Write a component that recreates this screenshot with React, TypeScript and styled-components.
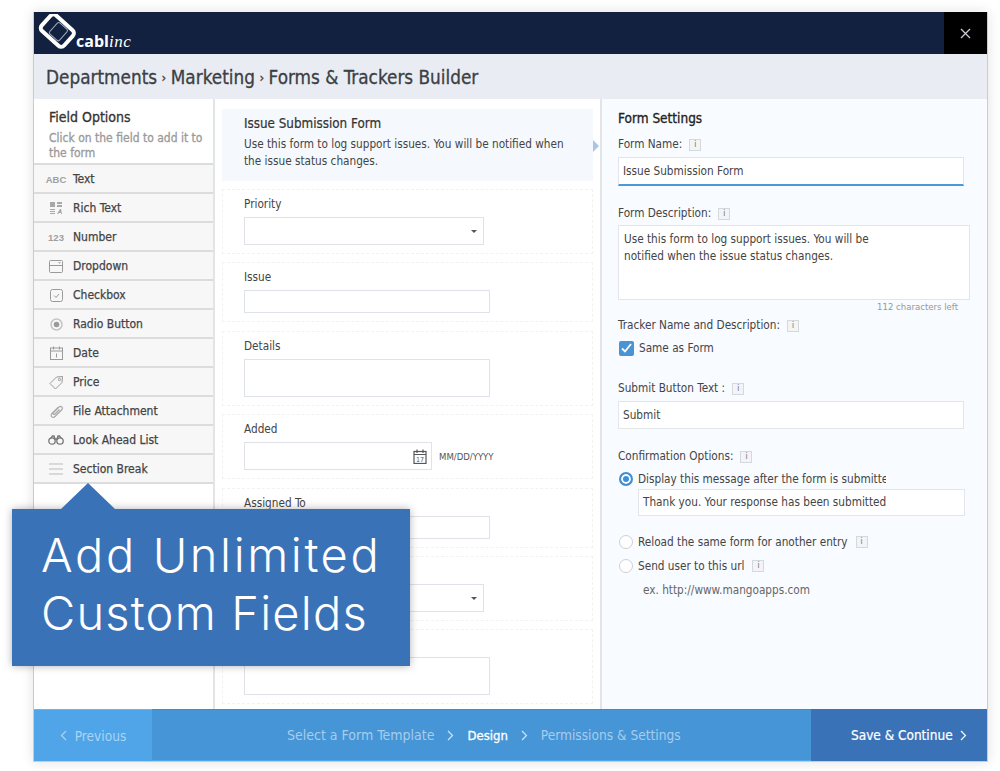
import React from 'react';
import styled, { createGlobalStyle } from 'styled-components';

const GlobalStyle = createGlobalStyle`
  html, body {
    margin: 0;
    padding: 0;
    background: #fff;
  }
  body {
    font-family: "DejaVu Sans", "Noto Sans", sans-serif;
    font-stretch: condensed;
    font-size: 11.7px;
    color: #444;
  }
  * {
    box-sizing: border-box;
  }
`;

const Stage = styled.div`
  position: relative;
  width: 1000px;
  height: 771px;
  padding: 12px 12px 9px 33px;
  overflow: hidden;
`;

const Window = styled.div`
  display: flex;
  flex-direction: column;
  height: 750px;
  border: 1px solid #c9cdd2;
  border-top: none;
  box-shadow: 0 0 12px rgba(0, 0, 0, 0.12);
`;

const TopBar = styled.header`
  display: flex;
  justify-content: space-between;
  flex: 0 0 42px;
  background: #12213f;
`;

const Logo = styled.div`
  display: flex;
  align-items: flex-end;
  padding: 2px 0 4px 3px;
`;

const LogoText = styled.span`
  font-family: "Open Sans", sans-serif;
  font-stretch: normal;
  font-size: 16px;
  font-weight: 700;
  color: #fff;
  line-height: 17px;
  margin-left: -1px;
`;

const LogoInc = styled.i`
  font-family: "Liberation Serif", serif;
  font-weight: 400;
  font-size: 17px;
  letter-spacing: 0.5px;
`;

const CloseBox = styled.button`
  width: 43px;
  border: none;
  padding: 0;
  background: #000;
  display: flex;
  align-items: center;
  justify-content: center;
`;

const Breadcrumb = styled.div`
  flex: 0 0 45px;
  display: flex;
  align-items: center;
  padding: 1px 0 0 12px;
  background: #e9edf3;
  font-size: 18.8px;
  font-weight: 400;
  color: #3c3f44;
  -webkit-text-stroke: 0.3px #3c3f44;
`;

const CrumbSep = styled.span`
  font-size: 13px;
  margin: 0 4.5px;
`;

const Body = styled.div`
  flex: 1;
  display: flex;
  min-height: 0;
`;

const Sidebar = styled.aside`
  flex: 0 0 181px;
  border-right: 2px solid #e2e4e6;
`;

const SidebarHead = styled.div`
  height: 64px;
  padding: 9px 0 0 15px;
`;

const SideTitle = styled.h3`
  margin: 0 0 5px;
  font-size: 14px;
  line-height: 18px;
  font-weight: 400;
  color: #333;
  -webkit-text-stroke: 0.3px #333;
`;

const SideHint = styled.p`
  margin: 0;
  font-size: 12px;
  line-height: 15px;
  color: #9a9a9a;
  -webkit-text-stroke: 0.3px #9a9a9a;
`;

const FieldList = styled.ul`
  list-style: none;
  margin: 0;
  padding: 0;
  border-top: 2px solid #dcdcdc;
`;

const FieldRow = styled.li`
  display: flex;
  align-items: center;
  height: 29px;
  padding-top: 1px;
  font-size: 12px;
  background: #f7f7f7;
  border-bottom: 2px solid #dcdcdc;
  color: #444;
  -webkit-text-stroke: 0.25px #444;
`;

const RowIcon = styled.span`
  flex: 0 0 39px;
  display: flex;
  justify-content: center;
  padding-left: 5px;
  color: #a0a0a0;
  font-family: "Liberation Sans", sans-serif;
  font-size: 9.5px;
  font-weight: 700;
  -webkit-text-stroke: 0;
`;

const Center = styled.main`
  flex: 0 0 387px;
  position: relative;
  padding: 10px 7px 0;
  overflow: hidden;
  border-right: 2px solid #e2e4e6;
`;

const FormHead = styled.div`
  height: 72px;
  margin-bottom: 8px;
  padding: 6px 22px 0;
  background: #f5f9fd;
  line-height: 17px;
  white-space: nowrap;
`;

const FormTitle = styled.div`
  font-size: 13.3px;
  line-height: 17px;
  margin-bottom: 4px;
  color: #333;
  -webkit-text-stroke: 0.2px #333;
`;

const Pointer = styled.span`
  position: absolute;
  left: 378px;
  top: 41px;
  border-left: 6px solid #a9c6e6;
  border-top: 6px solid transparent;
  border-bottom: 6px solid transparent;
`;

const FieldBox = styled.section`
  padding: 6px 0 8px 21px;
  margin-bottom: 8.4px;
  border: 1px dashed #f2f2f2;
`;

const FieldLabel = styled.div`
  height: 21px;
  padding-top: 1px;
  line-height: 15px;
  color: #444;
`;

const Inline = styled.div`
  display: flex;
  align-items: center;
`;

const Input = styled.div<{ $w: number; $h: number }>`
  position: relative;
  width: ${(p) => p.$w}px;
  height: ${(p) => p.$h}px;
  background: #fff;
  border: 1px solid #dfe3e9;
`;

const Caret = styled.span`
  position: absolute;
  right: 6px;
  top: 12px;
  border-top: 3px solid #555;
  border-left: 3px solid transparent;
  border-right: 3px solid transparent;
`;

const DateHint = styled.span`
  margin-left: 7px;
  font-size: 9.5px;
  color: #555;
`;

const CalBox = styled.span`
  display: flex;
  align-items: center;
  justify-content: center;
  position: absolute;
  right: 0;
  top: 0;
  bottom: 0;
  width: 22px;
`;

const Settings = styled.aside`
  flex: 1;
  padding: 11px 0 0 16px;
  background: #f8fbff;
  line-height: 15px;
`;

const SettingsTitle = styled.h3`
  margin: 0 0 10px;
  font-size: 13.5px;
  line-height: 17px;
  font-weight: 400;
  color: #222;
  -webkit-text-stroke: 0.3px #222;
`;

const SetLabel = styled.div<{ $mt?: number }>`
  display: flex;
  align-items: center;
  gap: 7px;
  height: 15px;
  margin-top: ${(p) => p.$mt ?? 0}px;
  color: #444;
`;

const Info = styled.span`
  width: 12px;
  height: 12px;
  border: 1px solid #d5d8dc;
  background: #f3f4f6;
  color: #666;
  font-size: 8px;
  line-height: 10px;
  text-align: center;
`;

const SetInput = styled.div<{ $w: number; $h: number; $active?: boolean; $mt?: number; $ml?: number }>`
  width: ${(p) => p.$w}px;
  height: ${(p) => p.$h}px;
  margin-top: ${(p) => p.$mt ?? 5}px;
  margin-left: ${(p) => p.$ml ?? 0}px;
  padding: 0 4px;
  display: flex;
  align-items: center;
  background: #fff;
  border: 1px solid #e2e6ea;
  border-bottom: ${(p) => (p.$active ? '2px solid #4a9ad9' : '1px solid #e2e6ea')};
  color: #444;
  white-space: nowrap;
`;

const TextArea = styled.div`
  width: 352px;
  height: 75px;
  margin-top: 4px;
  padding: 5px;
  background: #fff;
  border: 1px solid #e2e6ea;
  line-height: 17px;
  color: #444;
`;

const CharsLeft = styled.div`
  width: 340px;
  margin-top: 1px;
  text-align: right;
  font-size: 9.5px;
  line-height: 12px;
  color: #999;
`;

const OptionRow = styled.div<{ $mt?: number }>`
  display: flex;
  align-items: center;
  gap: 5px;
  height: 16px;
  margin-top: ${(p) => p.$mt ?? 0}px;
  color: #444;
`;

const CheckBox = styled.span`
  width: 15px;
  height: 15px;
  margin-left: 1px;
  border-radius: 2px;
  background: #4a94d6;
  display: flex;
  align-items: center;
  justify-content: center;
`;

const Radio = styled.span<{ $on?: boolean }>`
  width: 14px;
  height: 14px;
  margin-left: 1px;
  border-radius: 50%;
  border: ${(p) => (p.$on ? '2px solid #3f8fd6' : '1px solid #cfcfcf')};
  background: ${(p) => (p.$on ? '#3f8fd6' : '#fff')};
  box-shadow: ${(p) => (p.$on ? 'inset 0 0 0 2px #fff' : 'none')};
`;

const OptionInfo = styled(Info)`
  margin-left: 3px;
`;

const Example = styled.div`
  margin: 9px 0 0 25px;
  color: #666;
`;

const Clip = styled.span`
  display: inline-block;
  width: 248px;
  white-space: nowrap;
  overflow: hidden;
`;

const Footer = styled.footer`
  flex: 0 0 52px;
  display: flex;
  color: #fff;
  font-size: 13.6px;
`;

const PrevButton = styled.div`
  flex: 0 0 118px;
  display: flex;
  align-items: center;
  justify-content: center;
  gap: 8px;
  background: #4fa5e8;
  border-top: 1px solid #6db5ec;
  color: #a9d4f4;
`;

const Steps = styled.div`
  flex: 1;
  display: flex;
  align-items: center;
  gap: 13px;
  padding-left: 135px;
  background: #4695d6;
  border-top: 1px solid #3f8ccc;
  border-bottom: 1px solid #52a8ec;
  color: #a6cdec;
`;

const StepName = styled.span<{ $size: number }>`
  font-size: ${(p) => p.$size}px;
`;

const CurrentStep = styled.span`
  font-size: 13px;
  color: #fff;
  -webkit-text-stroke: 0.3px #fff;
`;

const SaveButton = styled.div`
  flex: 0 0 176px;
  display: flex;
  align-items: center;
  gap: 7px;
  padding-left: 40px;
  font-size: 13.500px;
  background: #3a72b8;
  -webkit-text-stroke: 0.2px #fff;
`;

const CalloutBox = styled.div`
  position: absolute;
  left: 12px;
  top: 509px;
  width: 398px;
  height: 157px;
  padding: 17px 0 0 29px;
  background: #3a72b8;
  box-shadow: 0 0 8px rgba(0, 0, 0, 0.3);
  color: #fff;
  font-family: Inter, "Open Sans", sans-serif;
  font-stretch: normal;
  font-weight: 300;
  font-size: 47px;
  line-height: 58px;

  &::before {
    content: '';
    position: absolute;
    left: 49px;
    top: -26px;
    border-bottom: 26px solid #3a72b8;
    border-left: 27px solid transparent;
    border-right: 27px solid transparent;
  }
`;

const CalloutLine = styled.div<{ $spacing: number }>`
  letter-spacing: ${(p) => p.$spacing}px;
  white-space: nowrap;
`;

const Chevron = ({ left, color }: { left?: boolean; color: string }) => (
  <svg width="7" height="11" viewBox="0 0 7 11" fill="none" stroke={color} strokeWidth="1.2">
    <path d={left ? 'M6 1 1.5 5.5 6 10' : 'M1 1l4.5 4.5L1 10'} />
  </svg>
);

const InfoIcon = () => <Info>i</Info>;

const iconProps = { fill: 'none', stroke: '#9a9a9a', strokeWidth: 1 };

const icons: Record<string, React.ReactNode> = {
  text: 'ABC',
  rich: (
    <svg width="14" height="14" viewBox="0 0 14 14" fill="#a8a8a8">
      <path d="M1 1h5v5H1zM8 1h5v2H8zM8 4h5v2H8zM1 8h5v1H1zM1 10h5v1H1zM1 12h5v1H1z" />
      <path d="M8 13l3-5h1l1 5h-1v-1h-2l-1 1z" />
    </svg>
  ),
  number: '123',
  dropdown: (
    <svg width="14" height="13" viewBox="0 0 14 13" {...iconProps}>
      <rect x="0.5" y="0.5" width="13" height="12" rx="1" />
      <path d="M0.5 5.5h13" />
      <path d="M9 2.2h3l-1.5 1.6z" fill="#9a9a9a" stroke="none" />
    </svg>
  ),
  checkbox: (
    <svg width="13" height="13" viewBox="0 0 13 13" {...iconProps}>
      <rect x="0.5" y="0.5" width="12" height="12" rx="2" />
      <path d="M4 6.5l2 2 3-3.500" />
    </svg>
  ),
  radio: (
    <svg width="13" height="13" viewBox="0 0 13 13" {...iconProps}>
      <circle cx="6.500" cy="6.500" r="5.500" stroke="#c4c4c4" strokeWidth="1.500" />
      <circle cx="6.500" cy="6.500" r="2.800" fill="#9a9a9a" stroke="none" />
    </svg>
  ),
  date: (
    <svg width="13" height="14" viewBox="0 0 13 14" {...iconProps}>
      <rect x="0.5" y="2" width="12" height="11.500" />
      <path d="M0.5 5h12M3.500 0.500v3M9.500 0.500v3M6.500 7.500v4" />
    </svg>
  ),
  price: (
    <svg width="15" height="15" viewBox="0 0 15 15" {...iconProps}>
      <path d="M1 8.500 7.500 2 13.500 1.500 13 7.500 6.500 14z" />
      <circle cx="10.500" cy="4.500" r="1.200" />
    </svg>
  ),
  attach: (
    <svg width="15" height="15" viewBox="0 0 15 15" fill="none" stroke="#a8a8a8" strokeWidth="1.200">
      <path d="M9 3.500 3 9.500c-2.500 3 1 5 3 3l7-7c1.500-2-1-4-3-2.500L4.500 8.500c-1 1.500.5 2.500 1.500 1.500L10.500 5.500" />
    </svg>
  ),
  look: (
    <svg width="16" height="10" viewBox="0 0 16 10" fill="none" stroke="#777" strokeWidth="1.300">
      <circle cx="4" cy="6" r="3.200" />
      <circle cx="12" cy="6" r="3.200" />
      <path d="M3 3l1.500-2h1.500l1 3h2l1-3h1.500L13 3" />
    </svg>
  ),
  section: (
    <svg width="14" height="12" viewBox="0 0 14 12" stroke="#bbb" strokeWidth="1">
      <path d="M0 1h14M0 6h14M0 11h14" />
    </svg>
  ),
};

const fieldTypes = [
  ['text', 'Text'],
  ['rich', 'Rich Text'],
  ['number', 'Number'],
  ['dropdown', 'Dropdown'],
  ['checkbox', 'Checkbox'],
  ['radio', 'Radio Button'],
  ['date', 'Date'],
  ['price', 'Price'],
  ['attach', 'File Attachment'],
  ['look', 'Look Ahead List'],
  ['section', 'Section Break'],
];

export default function App(): JSX.Element {
  return (
    <Stage>
      <GlobalStyle />
      <Window>
        <TopBar>
          <Logo>
            <svg width="40" height="36" viewBox="0 0 40 36" fill="none">
              <g transform="rotate(42 20 17)">
                <rect x="5" y="6" width="30" height="21" rx="4" stroke="#fff" strokeWidth="4" />
                <rect x="15" y="9" width="13" height="15" rx="2" stroke="#9fa8b8" strokeWidth="1" />
              </g>
            </svg>
            <LogoText>
              cabl<LogoInc>inc</LogoInc>
            </LogoText>
          </Logo>
          <CloseBox aria-label="Close">
            <svg width="11" height="11" viewBox="0 0 11 11" stroke="#c8ccd2" strokeWidth="1.300">
              <path d="M1 1l9 9M10 1l-9 9" />
            </svg>
          </CloseBox>
        </TopBar>
        <Breadcrumb>
          Departments<CrumbSep>›</CrumbSep>Marketing<CrumbSep>›</CrumbSep>Forms &amp; Trackers Builder
        </Breadcrumb>
        <Body>
          <Sidebar>
            <SidebarHead>
              <SideTitle>Field Options</SideTitle>
              <SideHint>
                Click on the field to add it to
                <br />
                the form
              </SideHint>
            </SidebarHead>
            <FieldList>
              {fieldTypes.map(([key, label]) => (
                <FieldRow key={key}>
                  <RowIcon>{icons[key]}</RowIcon>
                  {label}
                </FieldRow>
              ))}
            </FieldList>
          </Sidebar>
          <Center>
            <FormHead>
              <FormTitle>Issue Submission Form</FormTitle>
              Use this form to log support issues. You will be notified when
              <br />
              the issue status changes.
            </FormHead>
            <Pointer />
            <FieldBox>
              <FieldLabel>Priority</FieldLabel>
              <Input $w={240} $h={28}>
                <Caret />
              </Input>
            </FieldBox>
            <FieldBox>
              <FieldLabel>Issue</FieldLabel>
              <Input $w={246} $h={23} />
            </FieldBox>
            <FieldBox>
              <FieldLabel>Details</FieldLabel>
              <Input $w={246} $h={38} />
            </FieldBox>
            <FieldBox>
              <FieldLabel>Added</FieldLabel>
              <Inline>
                <Input $w={188} $h={28}>
                  <CalBox>
                    <svg width="14" height="15" viewBox="0 0 14 15" fill="none" stroke="#555" strokeWidth="1.200">
                      <rect x="1" y="2.500" width="12" height="12" />
                      <path d="M1 5.500h12M4 0.500v3.500M10 0.500v3.500" />
                      <text x="7" y="12.500" fontSize="7" fill="#555" stroke="none" textAnchor="middle">
                        17
                      </text>
                    </svg>
                  </CalBox>
                </Input>
                <DateHint>MM/DD/YYYY</DateHint>
              </Inline>
            </FieldBox>
            <FieldBox>
              <FieldLabel>Assigned To</FieldLabel>
              <Input $w={246} $h={23} />
            </FieldBox>
            <FieldBox>
              <FieldLabel />
              <Input $w={240} $h={28}>
                <Caret />
              </Input>
            </FieldBox>
            <FieldBox>
              <FieldLabel />
              <Input $w={246} $h={38} />
            </FieldBox>
          </Center>
          <Settings>
            <SettingsTitle>Form Settings</SettingsTitle>
            <SetLabel>
              Form Name: <InfoIcon />
            </SetLabel>
            <SetInput $w={346} $h={29} $active>
              Issue Submission Form
            </SetInput>
            <SetLabel $mt={20}>
              Form Description: <InfoIcon />
            </SetLabel>
            <TextArea>
              Use this form to log support issues. You will be
              <br />
              notified when the issue status changes.
            </TextArea>
            <CharsLeft>112 characters left</CharsLeft>
            <SetLabel $mt={5}>
              Tracker Name and Description: <InfoIcon />
            </SetLabel>
            <OptionRow $mt={7}>
              <CheckBox>
                <svg width="11" height="10" viewBox="0 0 11 10" fill="none" stroke="#fff" strokeWidth="1.800">
                  <path d="M1 5.500l3 3 6-7.500" />
                </svg>
              </CheckBox>
              Same as Form
            </OptionRow>
            <SetLabel $mt={25}>
              Submit Button Text : <InfoIcon />
            </SetLabel>
            <SetInput $w={346} $h={28} $mt={5}>
              Submit
            </SetInput>
            <SetLabel $mt={20}>
              Confirmation Options: <InfoIcon />
            </SetLabel>
            <OptionRow $mt={7}>
              <Radio $on />
              <Clip>Display this message after the form is submitted</Clip>
            </OptionRow>
            <SetInput $w={327} $h={27} $mt={2} $ml={20}>
              Thank you. Your response has been submitted
            </SetInput>
            <OptionRow $mt={18}>
              <Radio />
              Reload the same form for another entry
              <OptionInfo>i</OptionInfo>
            </OptionRow>
            <OptionRow $mt={8}>
              <Radio />
              Send user to this url
              <OptionInfo>i</OptionInfo>
            </OptionRow>
            <Example>ex. http://www.mangoapps.com</Example>
          </Settings>
        </Body>
        <Footer>
          <PrevButton>
            <Chevron left color="#a9d4f4" />
            Previous
          </PrevButton>
          <Steps>
            <StepName $size={14}>Select a Form Template</StepName>
            <Chevron color="#cfe4f6" />
            <CurrentStep>Design</CurrentStep>
            <Chevron color="#cfe4f6" />
            <StepName $size={13.6}>Permissions &amp; Settings</StepName>
          </Steps>
          <SaveButton>
            Save &amp; Continue
            <Chevron color="#fff" />
          </SaveButton>
        </Footer>
      </Window>
      <CalloutBox>
        <CalloutLine $spacing={2.6}>Add Unlimited</CalloutLine>
        <CalloutLine $spacing={1.2}>Custom Fields</CalloutLine>
      </CalloutBox>
    </Stage>
  );
}
